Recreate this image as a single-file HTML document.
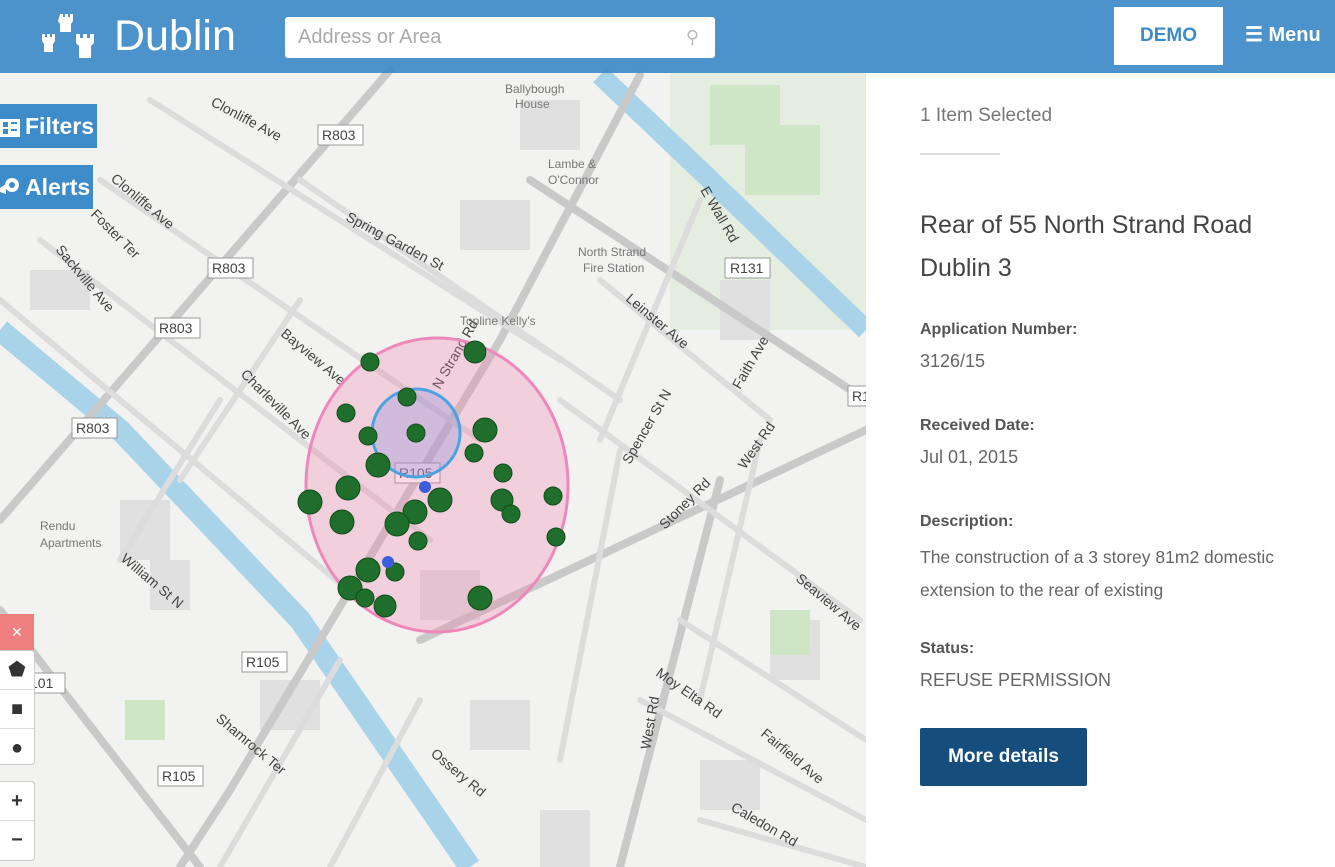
<!DOCTYPE html>
<html><head><meta charset="utf-8"><style>
body{margin:0;width:1335px;height:867px;overflow:hidden;font-family:"Liberation Sans",sans-serif;background:#f2f2f2;position:relative}
#map{position:absolute;left:0;top:0}
.hdr{position:absolute;left:0;top:0;width:1335px;height:73px;background:rgba(62,139,201,0.92)}
.logo{position:absolute;left:114px;top:12px;color:#fff;font-size:43px;letter-spacing:0px}
.search{position:absolute;left:285px;top:17px;width:430px;height:41px;background:#fff;border-radius:3px;color:#aaa;font-size:20px;line-height:41px;padding-left:13px;box-sizing:border-box}
.demo{position:absolute;left:1114px;top:7px;width:109px;height:58px;background:#fff;color:#3e8bc9;font-weight:bold;font-size:19px;line-height:58px;text-align:center}
.menu{position:absolute;left:1245px;top:22px;color:#fff;font-size:20px;font-weight:bold;white-space:nowrap}
.btn{position:absolute;left:0;background:#3e8bc9;color:#fff;font-size:23px;font-weight:bold;height:44px;line-height:44px;white-space:nowrap;overflow:hidden;box-sizing:border-box}
.btn svg{vertical-align:-3px;margin-right:5px}
.panel{position:absolute;left:866px;top:73px;width:469px;height:794px;background:#fff;color:#555}
.panel .p{position:absolute;left:54px;white-space:nowrap}
.lbl{font-size:16px;font-weight:bold;color:#555}
.val{font-size:18px;color:#666}
.ctl{position:absolute;left:0;width:34px;background:#fff;border:1px solid #ccc;border-left:none;border-radius:0 4px 4px 0}
.ctl div{height:38px;border-bottom:1px solid #ddd;text-align:center;line-height:38px;font-size:20px;color:#333}
</style></head><body>
<svg id="map" width="866" height="867" viewBox="0 0 866 867">
<rect width="866" height="867" fill="#f2f2f1"/>
<rect x="670" y="70" width="196" height="260" fill="#e4eddf"/>
<rect x="710" y="85" width="70" height="60" fill="#cfe6c6"/><rect x="745" y="125" width="75" height="70" fill="#cfe6c6"/>
<g fill="#e0e0e0">
<rect x="30" y="270" width="60" height="40"/><rect x="120" y="500" width="50" height="60"/><rect x="150" y="560" width="40" height="50"/><rect x="460" y="200" width="70" height="50"/><rect x="720" y="280" width="50" height="60"/><rect x="770" y="620" width="50" height="60"/><rect x="420" y="570" width="60" height="50"/><rect x="260" y="680" width="60" height="50"/><rect x="540" y="810" width="50" height="57"/><rect x="470" y="700" width="60" height="50"/><rect x="700" y="760" width="60" height="50"/><rect x="520" y="100" width="60" height="50"/>
</g>
<rect x="125" y="700" width="40" height="40" fill="#cfe6c6"/><rect x="770" y="610" width="40" height="45" fill="#cfe6c6"/>
<path d="M0 330 L120 430 L300 620 L470 867" stroke="#a9d3e8" stroke-width="22" fill="none"/>
<path d="M600 75 L700 170 L866 330" stroke="#a9d3e8" stroke-width="20" fill="none"/>
<g stroke="#c9c9c9" stroke-width="8" fill="none" stroke-linecap="round">
<path d="M0 520 L390 70"/><path d="M640 75 L500 340 L230 790 L180 867"/><path d="M0 610 L200 867"/>
<path d="M530 180 L866 400"/><path d="M420 640 L866 430"/><path d="M620 867 L720 480"/>
</g>
<g stroke="#dcdcdc" stroke-width="6" fill="none" stroke-linecap="round">
<path d="M150 100 L560 360"/><path d="M100 180 L480 440"/><path d="M40 240 L430 540"/><path d="M0 300 L360 600"/>
<path d="M300 180 L620 400"/><path d="M600 280 L770 420"/><path d="M560 400 L860 620"/>
<path d="M640 700 L866 820"/><path d="M680 620 L866 740"/><path d="M700 820 L866 867"/>
<path d="M620 450 L560 760"/><path d="M760 440 L700 700"/><path d="M300 300 L180 480"/><path d="M220 400 L120 560"/>
<path d="M340 660 L220 867"/><path d="M420 700 L330 867"/><path d="M700 200 L600 440"/>
</g>
<g font-family="Liberation Sans,sans-serif" font-size="14" fill="#444">
<text x="210" y="105" transform="rotate(28 210 105)">Clonliffe Ave</text>
<text x="110" y="180" transform="rotate(40 110 180)">Clonliffe Ave</text>
<text x="90" y="215" transform="rotate(45 90 215)">Foster Ter</text>
<text x="55" y="250" transform="rotate(50 55 250)">Sackville Ave</text>
<text x="345" y="220" transform="rotate(28 345 220)">Spring Garden St</text>
<text x="280" y="335" transform="rotate(40 280 335)">Bayview Ave</text>
<text x="240" y="375" transform="rotate(45 240 375)">Charleville Ave</text>
<text x="625" y="300" transform="rotate(40 625 300)">Leinster Ave</text>
<text x="630" y="465" transform="rotate(-60 630 465)">Spencer St N</text>
<text x="665" y="530" transform="rotate(-45 665 530)">Stoney Rd</text>
<text x="745" y="470" transform="rotate(-55 745 470)">West Rd</text>
<text x="740" y="390" transform="rotate(-60 740 390)">Faith Ave</text>
<text x="700" y="190" transform="rotate(60 700 190)">E Wall Rd</text>
<text x="120" y="560" transform="rotate(40 120 560)">William St N</text>
<text x="215" y="720" transform="rotate(40 215 720)">Shamrock Ter</text>
<text x="430" y="755" transform="rotate(40 430 755)">Ossery Rd</text>
<text x="655" y="675" transform="rotate(35 655 675)">Moy Elta Rd</text>
<text x="760" y="735" transform="rotate(40 760 735)">Fairfield Ave</text>
<text x="650" y="750" transform="rotate(-80 650 750)">West Rd</text>
<text x="795" y="580" transform="rotate(40 795 580)">Seaview Ave</text>
<text x="730" y="810" transform="rotate(30 730 810)">Caledon Rd</text>
<text x="440" y="390" transform="rotate(-60 440 390)">N Strand Rd</text>
<text x="40" y="530" font-size="12" fill="#777">Rendu</text><text x="40" y="547" font-size="12" fill="#777">Apartments</text>
<text x="505" y="93" font-size="12" fill="#777">Ballybough</text><text x="515" y="108" font-size="12" fill="#777">House</text>
<text x="548" y="168" font-size="12" fill="#777">Lambe &amp;</text><text x="548" y="184" font-size="12" fill="#777">O'Connor</text>
<text x="578" y="256" font-size="12" fill="#777">North Strand</text><text x="583" y="272" font-size="12" fill="#777">Fire Station</text>
<text x="460" y="325" font-size="12" fill="#777">Topline Kelly's</text>
</g>
<g font-family="Liberation Sans,sans-serif" font-size="14" fill="#444">
<g><rect x="318" y="125" width="45" height="20" fill="#fff" stroke="#999"/><text x="322" y="140">R803</text></g>
<g><rect x="208" y="258" width="45" height="20" fill="#fff" stroke="#999"/><text x="212" y="273">R803</text></g>
<g><rect x="155" y="318" width="45" height="20" fill="#fff" stroke="#999"/><text x="159" y="333">R803</text></g>
<g><rect x="72" y="418" width="45" height="20" fill="#fff" stroke="#999"/><text x="76" y="433">R803</text></g>
<g><rect x="725" y="258" width="45" height="20" fill="#fff" stroke="#999"/><text x="730" y="273">R131</text></g>
<g><rect x="242" y="652" width="45" height="20" fill="#fff" stroke="#999"/><text x="246" y="667">R105</text></g>
<g><rect x="158" y="766" width="45" height="20" fill="#fff" stroke="#999"/><text x="162" y="781">R105</text></g>
<g><rect x="395" y="463" width="45" height="20" fill="#fff" stroke="#999"/><text x="399" y="478">R105</text></g>
<g><rect x="25" y="673" width="40" height="20" fill="#fff" stroke="#999"/><text x="30" y="688">101</text></g>
<g><rect x="848" y="386" width="30" height="20" fill="#fff" stroke="#999"/><text x="852" y="401">R1</text></g>
</g>
<ellipse cx="437" cy="485" rx="131" ry="147" fill="rgba(240,120,170,0.28)" stroke="#ee88bb" stroke-width="3"/>
<circle cx="416" cy="433" r="44" fill="rgba(150,150,220,0.35)" stroke="#4aa3df" stroke-width="3"/>
<g fill="#1f6e2c" stroke="#114d1a" stroke-width="1">
<circle cx="370" cy="362" r="9"/><circle cx="475" cy="352" r="11"/><circle cx="407" cy="397" r="9"/><circle cx="346" cy="413" r="9"/><circle cx="416" cy="433" r="9"/><circle cx="368" cy="436" r="9"/><circle cx="485" cy="430" r="12"/><circle cx="474" cy="453" r="9"/><circle cx="378" cy="465" r="12"/><circle cx="503" cy="473" r="9"/><circle cx="310" cy="502" r="12"/><circle cx="348" cy="488" r="12"/><circle cx="440" cy="500" r="12"/><circle cx="415" cy="512" r="12"/><circle cx="502" cy="500" r="11"/><circle cx="511" cy="514" r="9"/><circle cx="553" cy="496" r="9"/><circle cx="342" cy="522" r="12"/><circle cx="397" cy="524" r="12"/><circle cx="418" cy="541" r="9"/><circle cx="556" cy="537" r="9"/><circle cx="368" cy="570" r="12"/><circle cx="395" cy="572" r="9"/><circle cx="350" cy="588" r="12"/><circle cx="365" cy="598" r="9"/><circle cx="385" cy="606" r="11"/><circle cx="480" cy="598" r="12"/>
</g>
<circle cx="425" cy="487" r="6" fill="#3b5ddb"/><circle cx="388" cy="562" r="6" fill="#3b5ddb"/>
</svg>
<div class="hdr"></div>
<svg style="position:absolute;left:40px;top:12px" width="62" height="52" viewBox="0 0 62 52" fill="#fff">
<path d="M20 2h3v3h2V2h3v3h2V2h3v7l-2 3v8h-11v-8l-2-3z"/>
<path d="M2 22h3v3h2v-3h3v3h2v-3h3v7l-2 3v8H4v-8l-2-3z"/>
<path d="M36 22h4v4h3v-4h4v4h3v-4h4v9l-3 3v12H39V34l-3-3z"/>
</svg>
<div class="logo">Dublin</div>
<div class="search">Address or Area<span style="position:absolute;right:16px;color:#bbb;font-size:18px">&#9906;</span></div>
<div class="demo">DEMO</div>
<div class="menu">&#9776; Menu</div>
<div class="btn" style="top:104px;width:97px;padding-left:0"><svg width="20" height="18" viewBox="0 0 20 18" fill="#fff"><rect x="0" y="0" width="20" height="18"/><rect x="3" y="3" width="5" height="5" fill="#3e8bc9"/><rect x="11" y="3" width="6" height="2" fill="#3e8bc9"/><rect x="3" y="10" width="5" height="5" fill="#3e8bc9"/><rect x="11" y="10" width="6" height="2" fill="#3e8bc9"/></svg>Filters</div>
<div class="btn" style="top:165px;width:93px;padding-left:0"><svg width="20" height="22" viewBox="0 0 20 22" fill="#fff"><path d="M0 12 L6 8 L6 18 L0 16Z"/><circle cx="12" cy="9" r="7"/><circle cx="12" cy="9" r="3" fill="#3e8bc9"/></svg>Alerts</div>
<div style="position:absolute;left:0;top:614px;width:34px;height:36px;background:#f08080;color:#fff;text-align:center;line-height:36px;font-size:14px">&#10005;</div>
<div class="ctl" style="top:650px;height:113px"><div>&#11039;</div><div>&#9632;</div><div style="border:none">&#9679;</div></div>
<div class="ctl" style="top:781px;height:78px"><div style="font-weight:bold">+</div><div style="border:none;font-weight:bold">&minus;</div></div>
<div class="panel">
<div class="p" style="top:32px;font-size:19px;color:#777">1 Item Selected</div>
<div class="p" style="top:80px;width:80px;height:2px;background:#ddd"></div>
<div class="p" style="top:131px;font-size:25px;color:#444;line-height:43px">Rear of 55 North Strand Road<br>Dublin 3</div>
<div class="p lbl" style="top:248px">Application Number:</div>
<div class="p val" style="top:278px">3126/15</div>
<div class="p lbl" style="top:344px">Received Date:</div>
<div class="p val" style="top:374px">Jul 01, 2015</div>
<div class="p lbl" style="top:440px">Description:</div>
<div class="p val" style="top:468px;line-height:33px;white-space:normal;width:420px;font-size:17.5px">The construction of a 3 storey 81m2 domestic extension to the rear of existing</div>
<div class="p lbl" style="top:567px">Status:</div>
<div class="p val" style="top:597px">REFUSE PERMISSION</div>
<div class="p" style="top:655px;width:167px;height:58px;background:#154d7c;color:#fff;font-weight:bold;font-size:19px;text-align:center;line-height:58px;border-radius:2px">More details</div>
</div>
</body></html>
